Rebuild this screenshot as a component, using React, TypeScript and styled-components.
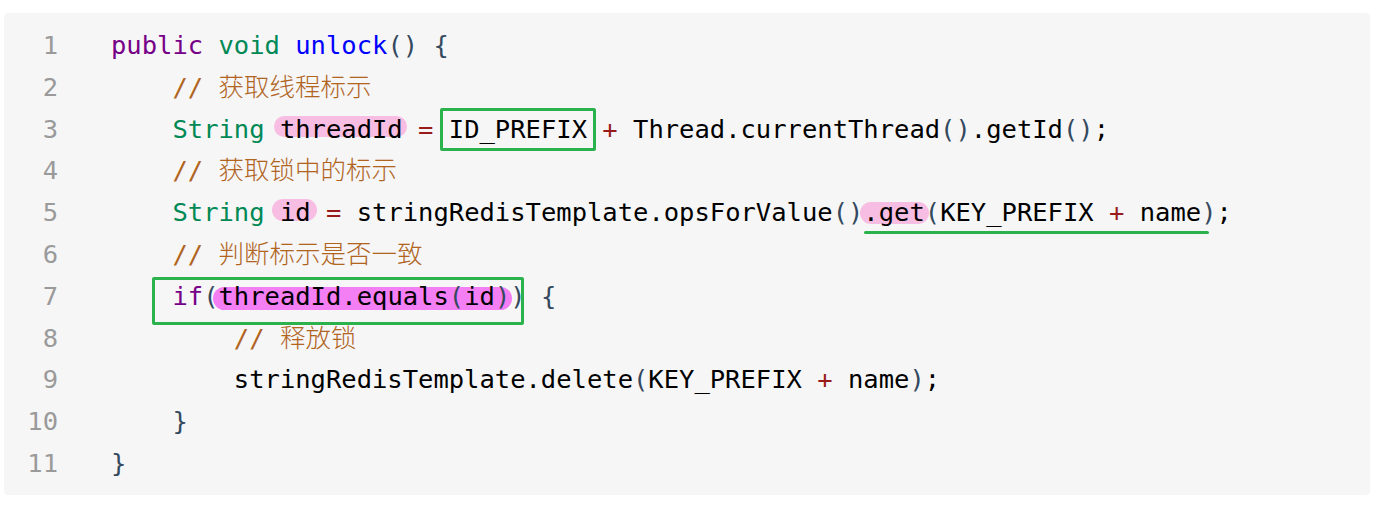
import React from "react";
import styled, { createGlobalStyle } from "styled-components";

const GlobalStyle = createGlobalStyle`
  html, body { margin: 0; padding: 0; background: #ffffff; }
  body { font-family: "DejaVu Sans Mono", "Noto Sans CJK SC", monospace; }
`;

const CodeBlock = styled.div`
  margin: 13px 12px 11px 4px;
  padding: 12px 0 10px;
  background: #f6f6f6;
  border-radius: 4px;
  font-family: "DejaVu Sans Mono", "Noto Sans CJK SC", monospace;
  font-size: 25.5px;
`;

const Row = styled.div`
  display: grid;
  grid-template-columns: 54px 1fr;
  column-gap: 53px;
  height: 41.8px;
  line-height: 41.8px;
  position: relative;
  z-index: 0;
  white-space: pre;
  color: #000;
`;

const LineNo = styled.span`
  text-align: right;
  color: #9a9a9a;
`;

const Code = styled.span`
  display: block;
`;

const Tok = styled.span<{ $c: string }>`
  color: ${(p) => p.$c};
`;

const Comment = styled.span`
  color: #b0641e;
  font-weight: 300;
`;

const Mark = styled.span<{ $bg: string; $t: number; $b: number; $l: number; $r: number }>`
  position: relative;
  &::before {
    content: "";
    position: absolute;
    z-index: -1;
    top: ${(p) => p.$t}px;
    bottom: ${(p) => p.$b}px;
    left: ${(p) => p.$l}px;
    right: ${(p) => p.$r}px;
    background: ${(p) => p.$bg};
    border-radius: 12px;
  }
`;

const Box = styled.span<{ $t: number; $b: number; $l: number; $r: number }>`
  position: relative;
  &::after {
    content: "";
    position: absolute;
    top: ${(p) => p.$t}px;
    bottom: ${(p) => p.$b}px;
    left: ${(p) => p.$l}px;
    right: ${(p) => p.$r}px;
    border: 3px solid #2bb24c;
    border-radius: 2px;
    pointer-events: none;
  }
`;

const Underline = styled.span`
  position: relative;
  &::after {
    content: "";
    position: absolute;
    left: 1px;
    right: 8px;
    bottom: -7px;
    height: 3px;
    background: #2bb24c;
    border-radius: 2px;
  }
`;

const KW = "#770088";
const TYPE = "#008855";
const DEF = "#0000ff";
const OP = "#981a1a";
const BR = "#34495e";
const PINK = "#f8bde2";
const MAGENTA = "#f47ef4";

const K = ({ children }: { children: React.ReactNode }) => <Tok $c={KW}>{children}</Tok>;
const T = ({ children }: { children: React.ReactNode }) => <Tok $c={TYPE}>{children}</Tok>;
const C = ({ children }: { children: React.ReactNode }) => <Comment>{children}</Comment>;
const O = ({ children }: { children: React.ReactNode }) => <Tok $c={OP}>{children}</Tok>;
const B = ({ children }: { children: React.ReactNode }) => <Tok $c={BR}>{children}</Tok>;

const lines: React.ReactNode[] = [
  <>
    <K>public</K> <T>void</T> <Tok $c={DEF}>unlock</Tok>
    <B>()</B> <B>{"{"}</B>
  </>,
  <>
    {"    "}
    <C>// 获取线程标示</C>
  </>,
  <>
    {"    "}
    <T>String</T>{" "}
    <Mark $bg={PINK} $t={2} $b={7} $l={-6} $r={-4}>
      threadId
    </Mark>{" "}
    <O>=</O>{" "}
    <Box $t={-6} $b={-7} $l={-9} $r={-9}>
      ID_PREFIX
    </Box>{" "}
    <O>+</O> Thread.currentThread<B>()</B>.getId<B>()</B>;
  </>,
  <>
    {"    "}
    <C>// 获取锁中的标示</C>
  </>,
  <>
    {"    "}
    <T>String</T>{" "}
    <Mark $bg={PINK} $t={2} $b={6} $l={-8} $r={-6}>
      id
    </Mark>{" "}
    <O>=</O> stringRedisTemplate.opsForValue<B>()</B>
    <Underline>
      <Mark $bg={PINK} $t={5} $b={3} $l={-3} $r={-4}>
        .get
      </Mark>
      <B>(</B>KEY_PREFIX <O>+</O> name<B>)</B>
    </Underline>
    ;
  </>,
  <>
    {"    "}
    <C>// 判断标示是否一致</C>
  </>,
  <>
    {"    "}
    <Box $t={-4} $b={-14} $l={-20} $r={2}>
      <K>if</K>
      <B>(</B>
      <Mark $bg={MAGENTA} $t={6} $b={1} $l={-6} $r={-2}>
        threadId.equals<B>(</B>id<B>)</B>
      </Mark>
      <B>)</B>
    </Box>{" "}
    <B>{"{"}</B>
  </>,
  <>
    {"        "}
    <C>// 释放锁</C>
  </>,
  <>
    {"        "}stringRedisTemplate.delete<B>(</B>KEY_PREFIX <O>+</O> name<B>)</B>;
  </>,
  <>
    {"    "}
    <B>{"}"}</B>
  </>,
  <>
    <B>{"}"}</B>
  </>,
];

export default function App() {
  return (
    <>
      <GlobalStyle />
      <CodeBlock>
        {lines.map((l, i) => (
          <Row key={i}>
            <LineNo>{i + 1}</LineNo>
            <Code>{l}</Code>
          </Row>
        ))}
      </CodeBlock>
    </>
  );
}
